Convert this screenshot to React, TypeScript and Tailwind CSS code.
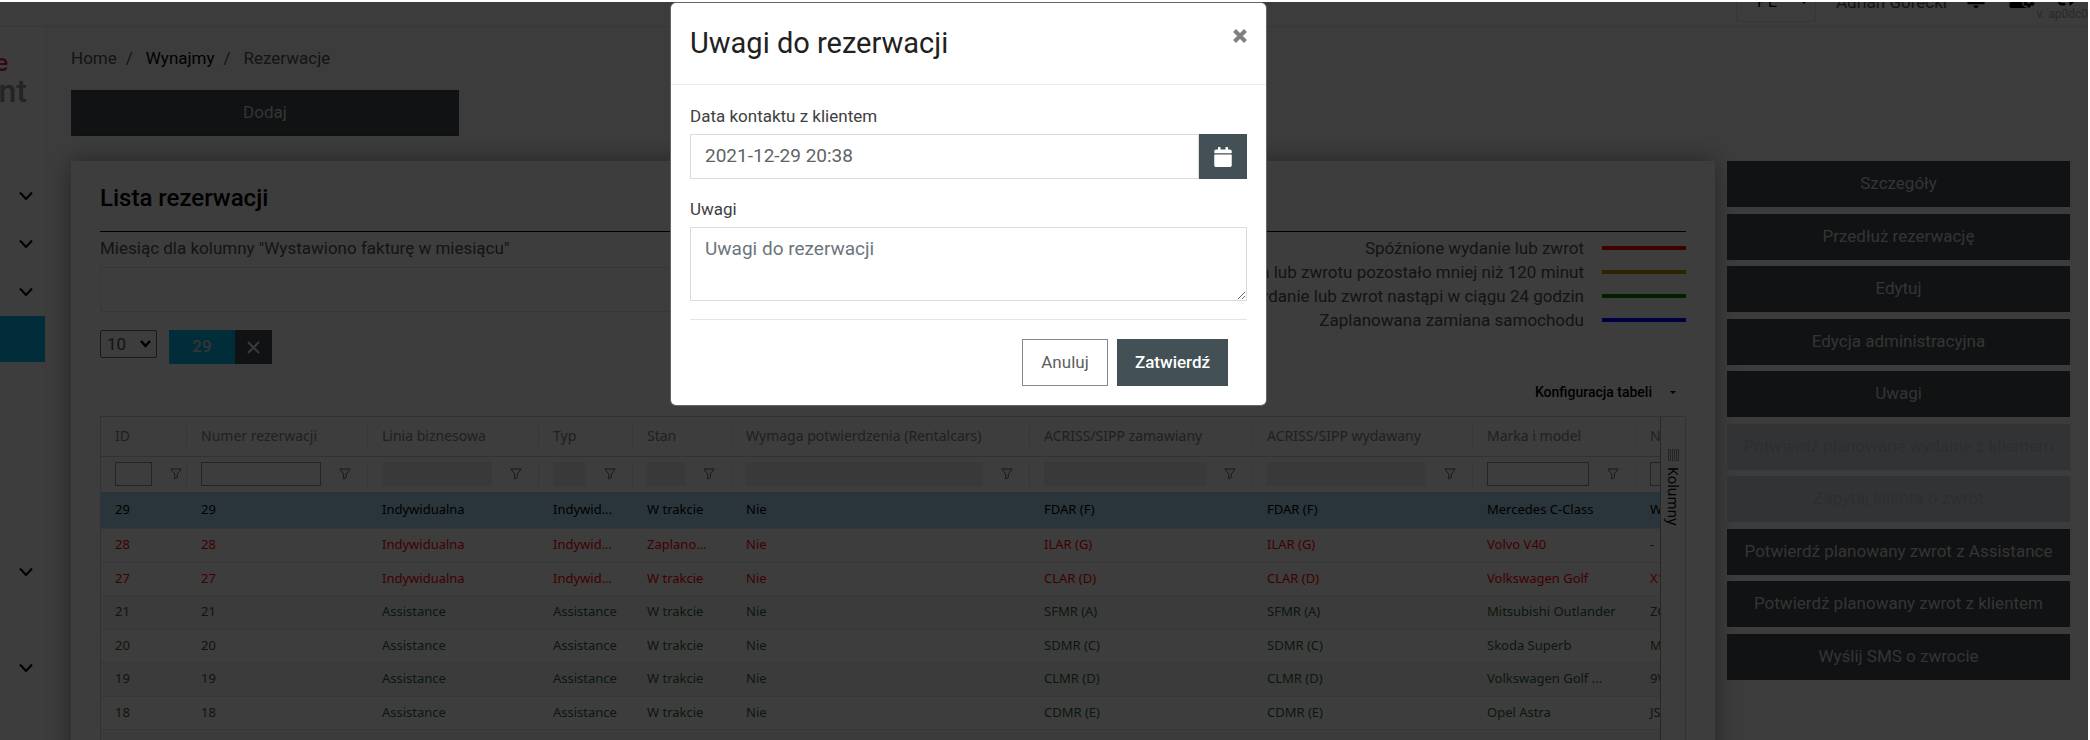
import type { ReactNode } from "react";
import { FaBell, FaCalendar, FaSignOutAlt, FaUserCog } from "react-icons/fa";

const COLS = [
  { label: "ID", width: "w-[86px]", filter: "text" },
  { label: "Numer rezerwacji", width: "w-[181px]", filter: "text" },
  { label: "Linia biznesowa", width: "w-[171px]", filter: "off" },
  { label: "Typ", width: "w-[94px]", filter: "off" },
  { label: "Stan", width: "w-[99px]", filter: "off" },
  { label: "Wymaga potwierdzenia (Rentalcars)", width: "w-[298px]", filter: "off" },
  { label: "ACRISS/SIPP zamawiany", width: "w-[223px]", filter: "off" },
  { label: "ACRISS/SIPP wydawany", width: "w-[220px]", filter: "off" },
  { label: "Marka i model", width: "w-[163px]", filter: "text" },
  { label: "Numer rejestracyjny", width: "w-[160px]", filter: "text" },
];

const ROWS = [
  ["29", "29", "Indywidualna", "Indywid...", "W trakcie", "Nie", "FDAR (F)", "FDAR (F)", "Mercedes C-Class", "WW 1029"],
  ["28", "28", "Indywidualna", "Indywid...", "Zaplano...", "Nie", "ILAR (G)", "ILAR (G)", "Volvo V40", "-"],
  ["27", "27", "Indywidualna", "Indywid...", "W trakcie", "Nie", "CLAR (D)", "CLAR (D)", "Volkswagen Golf", "X1027"],
  ["21", "21", "Assistance", "Assistance", "W trakcie", "Nie", "SFMR (A)", "SFMR (A)", "Mitsubishi Outlander", "ZG 1021"],
  ["20", "20", "Assistance", "Assistance", "W trakcie", "Nie", "SDMR (C)", "SDMR (C)", "Skoda Superb", "MM 1020"],
  ["19", "19", "Assistance", "Assistance", "W trakcie", "Nie", "CLMR (D)", "CLMR (D)", "Volkswagen Golf  ...", "9W1019"],
  ["18", "18", "Assistance", "Assistance", "W trakcie", "Nie", "CDMR (E)", "CDMR (E)", "Opel Astra", "JS 1018"],
  ["17", "17", "Assistance", "Assistance", "W trakcie", "Nie", "CDMR (E)", "CDMR (E)", "Opel Astra", "JS 1017"],
];

const ROW_TONE = [
  "bg-[#a5d3e8] text-black",
  "bg-[#f2f2f2] text-[#ff0000]",
  "bg-[#f2f2f2] text-[#ff0000]",
  "bg-[#ebebeb] text-[#306038]",
  "bg-[#f2f2f2] text-[#306038]",
  "bg-[#ebebeb] text-[#306038]",
  "bg-[#f2f2f2] text-[#306038]",
  "bg-[#ebebeb] text-[#306038]",
];

const LEGEND = [
  { text: "Spóźnione wydanie lub zwrot", color: "bg-[#ff0000]" },
  { text: "Do wydania lub zwrotu pozostało mniej niż 120 minut", color: "bg-[#b8860b]" },
  { text: "Wydanie lub zwrot nastąpi w ciągu 24 godzin", color: "bg-[#008000]" },
  { text: "Zaplanowana zamiana samochodu", color: "bg-[#0000ff]" },
];

const ACTIONS = [
  { text: "Szczegóły" },
  { text: "Przedłuż rezerwację" },
  { text: "Edytuj" },
  { text: "Edycja administracyjna" },
  { text: "Uwagi" },
  { text: "Potwierdź planowane wydanie z klientem", disabled: true },
  { text: "Zapytaj klienta o zwrot", disabled: true },
  { text: "Potwierdź planowany zwrot z Assistance" },
  { text: "Potwierdź planowany zwrot z klientem" },
  { text: "Wyślij SMS o zwrocie" },
];

// "open" entries have a chevron, "leaf" ones are submenu links
const NAV = ["open", "open", "open", "active", "leaf", "leaf", "leaf", "item", "open", "item", "open"];

export default function App() {
  return (
    <div className="relative h-screen overflow-hidden bg-white pr-0.5 pt-0.5 font-[Roboto,sans-serif] text-[17px] text-[#505050]">
      <div className="h-full overflow-hidden bg-[#f0f0f0]">
        <TopBar />
        <div className="flex">
          <Sidebar />
          <main className="min-w-0 flex-1 pl-[25px] pr-[18px]">
            <nav className="flex gap-[9px] pt-[19px] leading-6">
              <a href="#home">Home</a>
              <span className="mr-1">/</span>
              <a href="#wynajmy" className="text-black">Wynajmy</a>
              <span className="mr-1">/</span>
              <span>Rezerwacje</span>
            </nav>
            <button className="mt-5 h-[46px] w-[388px] bg-[#40484c] text-[#d0d0d0]">
              Dodaj
            </button>
            <div className="mt-[25px] flex gap-3">
              <ListCard />
              <Actions />
            </div>
          </main>
        </div>
      </div>
      <div className="absolute bottom-0 left-0 right-0.5 top-0.5 bg-black/75" />
      <NotesDialog />
    </div>
  );
}

function TopBar() {
  return (
    <header className="flex h-[25px] items-end justify-end overflow-hidden border-b border-[#dcdcdc]">
      <div className="relative mb-1 h-10 w-20 shrink-0">
        <select aria-label="Język" className="h-10 w-20 appearance-none border border-[#d8d8d8] px-5 text-black">
          <option>PL</option>
        </select>
        <span className="absolute right-2 top-[18px] border-x-4 border-t-4 border-x-transparent border-t-black" />
      </div>
      <span className="mb-[11px] ml-5 w-[120px] shrink-0">Adrian Gorecki</span>
      <div className="mb-1.5 ml-2.5 w-[122px] shrink-0 text-black">
        <div className="flex items-center gap-[22px]">
          <FaBell className="h-5 w-5" />
          <FaUserCog className="h-5 w-7" />
          <FaSignOutAlt className="h-5 w-5" />
        </div>
        <div className="text-right text-xs leading-3 text-[#a0a0a0]">v. ap0dc0</div>
      </div>
    </header>
  );
}

function Sidebar() {
  return (
    <aside className="w-[46px] shrink-0 overflow-hidden border-r border-[#e4e4e4] bg-[#f4f4f4]">
      <div className="flex h-[145px] flex-col items-end pt-[22px] font-medium">
        <span className="mr-[37px] text-2xl leading-7 text-[#d02030]">Rentcare</span>
        <span className="mr-[18px] text-[32px] leading-7 text-[#909090]">Rent</span>
      </div>
      {NAV.map((kind, i) => (
        <a
          key={i}
          href="#nav"
          aria-label={`Menu ${i + 1}`}
          className={
            kind === "active"
              ? "block h-[46px] bg-[#00b4e4]"
              : kind === "leaf"
                ? "block h-[46px]"
                : "flex h-12 items-center justify-end pr-3 text-black"
          }
        >
          {kind === "open" && (
            <svg width="14" height="10" viewBox="0 0 14 10" fill="none" stroke="currentColor" strokeWidth="2">
              <path d="M1 1.5 7 8l6-6.5" />
            </svg>
          )}
        </a>
      ))}
    </aside>
  );
}

function ListCard() {
  return (
    <section className="min-w-0 flex-1 bg-[#f2f2f2] px-[29px] shadow-[0_0_24px_rgba(0,0,0,0.4)]">
      <h2 className="flex h-[71px] items-center border-b border-black pt-1 text-2xl font-medium text-black">
        Lista rezerwacji
      </h2>
      <div className="flex justify-between pt-1">
        <div className="w-[520px]">
          <label htmlFor="month" className="block leading-6">
            Miesiąc dla kolumny "Wystawiono fakturę w miesiącu"
          </label>
          <input id="month" className="mt-[7px] h-[45px] w-[780px] border border-[#dcdcdc]" />
          <div className="mt-[18px] flex h-[42px] items-start gap-3">
            <PageSize />
            <div className="flex h-[34px] font-medium">
              <span className="flex w-[66px] items-center justify-center bg-[#00b4e4] text-[#d0d0d0]">29</span>
              <button aria-label="Usuń" className="flex w-[37px] items-center justify-center bg-[#40484c] text-[#e8e8e8]">
                <svg width="13" height="13" viewBox="0 0 13 13" stroke="currentColor" strokeWidth="2">
                  <path d="M1 1l11 11M12 1 1 12" />
                </svg>
              </button>
            </div>
          </div>
        </div>
        <ul className="text-right leading-6">
          {LEGEND.map((l) => (
            <li key={l.text} className="flex items-center justify-end gap-[18px]">
              {l.text}
              <span className={`h-1 w-[84px] ${l.color}`} />
            </li>
          ))}
        </ul>
      </div>
      <div className="flex h-11 items-center justify-end pb-1">
        <button className="flex h-7 items-center gap-[18px] pr-2.5 text-sm font-medium text-black">
          Konfiguracja tabeli
          <span className="border-x-[3px] border-t-[3px] border-x-transparent border-t-black" />
        </button>
      </div>
      <Grid />
    </section>
  );
}

function PageSize() {
  return (
    <div className="relative">
      <select aria-label="Liczba wierszy" className="block h-7 w-[57px] appearance-none rounded-xs border border-[#606060] px-1.5 leading-6">
        <option>10</option>
      </select>
      <svg className="absolute right-1.5 top-2.5" width="11" height="8" viewBox="0 0 11 8" fill="none" stroke="#000" strokeWidth="2.5">
        <path d="M1 1l4.500 5L10 1" />
      </svg>
    </div>
  );
}

function Grid() {
  return (
    <div className="flex border border-[#c8c8c8] font-['Noto_Sans',sans-serif] text-[13px]">
      <div className="min-w-0 flex-1 overflow-hidden">
        <table className="w-[1695px] table-fixed border-collapse text-left">
          <thead className="text-sm text-[#808080]">
            <tr className="h-[39px] border-b border-[#c8c8c8]">
              {COLS.map((c) => (
                <th key={c.label} scope="col" className={`${c.width} p-0 font-normal`}>
                  <HeadCell>{c.label}</HeadCell>
                </th>
              ))}
            </tr>
            <tr className="h-9">
              {COLS.map((c, i) => (
                <td key={c.label} className="p-0">
                  <div className={`flex h-6 items-center gap-[18px] border-r border-[#dcdcdc] pl-3.5 ${i === 0 ? "pr-1" : "pr-4"}`}>
                    <input
                      aria-label={`Filtr ${c.label}`}
                      disabled={c.filter === "off"}
                      className="h-6 w-full min-w-0 border border-[#909090] disabled:border-[#e4e4e4] disabled:bg-[#e4e4e4]"
                    />
                    <FilterIcon />
                  </div>
                </td>
              ))}
            </tr>
          </thead>
          <tbody>
            {ROWS.map((row, r) => (
              <tr key={row[0]} className={`border-b border-[#dcdcdc] ${r === 0 ? "h-9" : "odd:h-[33px] even:h-[34px]"} ${ROW_TONE[r]}`}>
                {row.map((cell, i) => (
                  <td key={i} className="truncate py-0 pl-3.5 pr-3">{cell}</td>
                ))}
              </tr>
            ))}
          </tbody>
        </table>
      </div>
      <button className="flex w-[25px] shrink-0 flex-col items-center gap-1.5 border-l border-[#a0a0a0] pt-8 text-sm text-black">
        <svg width="13" height="12" viewBox="0 0 13 12" fill="none" stroke="#909090" strokeWidth="1">
          <path d="M1.500 .5h2v11h-2zM5.500 .5h2v11h-2zM9.500 .5h2v11h-2z" />
        </svg>
        <span className="[writing-mode:vertical-rl]">Kolumny</span>
      </button>
    </div>
  );
}

function HeadCell({ children }: { children: ReactNode }) {
  return <div className="truncate border-r border-[#dcdcdc] pl-3.5 leading-5">{children}</div>;
}

function FilterIcon() {
  return (
    <svg className="shrink-0" width="12" height="12" viewBox="0 0 12 12" fill="none" stroke="#606060">
      <path d="M.8 1h10.400L7.300 6v3.500L4.700 11V6z" />
    </svg>
  );
}

function Actions() {
  return (
    <div className="w-[343px] shrink-0">
      {ACTIONS.map((a) => (
        <button
          key={a.text}
          disabled={a.disabled}
          className="relative block h-[46px] w-full bg-[#40484c] text-[#d0d0d0] odd:mb-[7px] even:mb-1.5 disabled:bg-[#c8cccf] disabled:text-[#b4b8bc]"
        >
          {a.text}
        </button>
      ))}
    </div>
  );
}

function NotesDialog() {
  return (
    <div className="absolute inset-x-0 top-0.5 flex justify-center pr-[153px]">
      <div role="dialog" aria-labelledby="dlg-title" className="w-[597px] rounded-md border border-black/60 bg-white text-[#404040]">
        <div className="flex items-start justify-between border-b border-[#e9ecef] px-[19px] pb-5 pt-[19px]">
          <h1 id="dlg-title" className="text-[29px] leading-[42px] text-[#212121]">
            Uwagi do rezerwacji
          </h1>
          <button aria-label="Zamknij" className="mt-[7px] text-[#808080]">
            <svg width="14" height="14" viewBox="0 0 14 14" stroke="currentColor" strokeWidth="4">
              <path d="M1.500 1.500l11 11M12.500 1.500l-11 11" />
            </svg>
          </button>
        </div>
        <form className="px-[19px] pb-[19px] pt-[19px]">
          <label htmlFor="contact" className="block leading-6">Data kontaktu z klientem</label>
          <div className="mt-1.5 flex h-[45px]">
            <input
              id="contact"
              defaultValue="2021-12-29 20:38"
              className="min-w-0 flex-1 border border-[#d8dcdc] px-3.5 text-[19px] text-[#606468]"
            />
            <button type="button" aria-label="Kalendarz" className="flex w-12 items-center justify-center bg-[#435055] text-white">
              <FaCalendar className="h-5 w-[18px]" />
            </button>
          </div>
          <label htmlFor="notes" className="mt-[18px] block leading-6">Uwagi</label>
          <textarea
            id="notes"
            placeholder="Uwagi do rezerwacji"
            className="mt-1.5 block h-[74px] w-full border border-[#d8dcdc] px-3.5 py-[7px] text-[19px] leading-7 placeholder:text-[#6c757d]"
          />
          <div className="mt-[18px] flex justify-end gap-[9px] border-t border-[#e4e4e4] pr-[19px] pt-[19px]">
            <button type="button" className="h-[47px] w-[86px] border border-[#808890] text-[#606060]">Anuluj</button>
            <button type="button" className="h-[47px] w-[111px] bg-[#435055] font-medium text-white">Zatwierdź</button>
          </div>
        </form>
      </div>
    </div>
  );
}
